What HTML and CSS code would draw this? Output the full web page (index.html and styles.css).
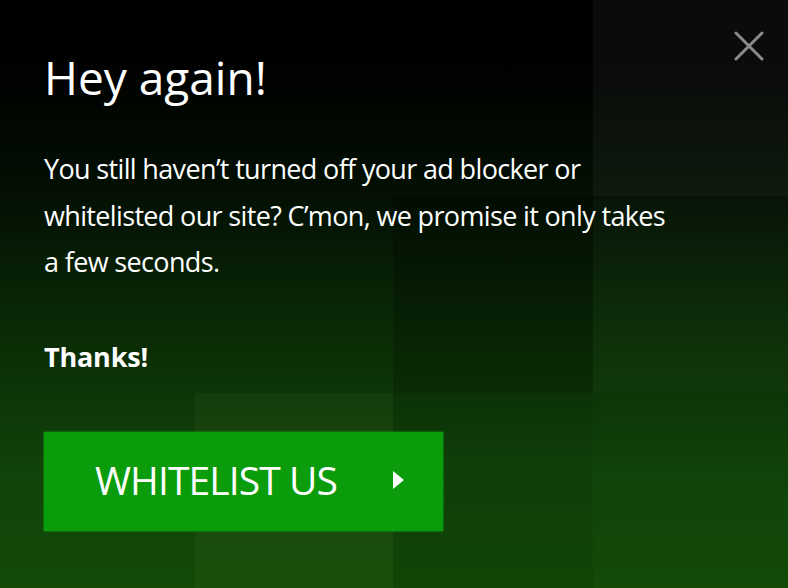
FILE: index.html
```html
<!DOCTYPE html>
<html lang="en">
<head>
<meta charset="UTF-8" />
<title>Hey again!</title>
<link rel="stylesheet" href="styles.css">
</head>
<body>
<div class="backdrop" aria-hidden="true">
  <div class="cell"></div><div class="cell"></div><div class="cell"></div><div class="cell light-1"></div>
  <div class="cell"></div><div class="cell"></div><div class="cell dark-2"></div><div class="cell light-0"></div>
  <div class="cell"></div><div class="cell light-2"></div><div class="cell dark-1"></div><div class="cell"></div>
</div>

<button class="close" aria-label="Schließen">
  <svg width="32" height="32" viewBox="0 0 32 32">
    <path d="M3 3 L29 29 M29 3 L3 29" stroke="#8c8c8c" stroke-width="3" stroke-linecap="round" fill="none"/>
  </svg>
</button>

<main class="modal">
  <h1>Hey again!</h1>
  <p class="text">You still haven’t turned off your ad blocker or whitelisted our site? C’mon, we promise it only takes a few seconds.</p>
  <p class="thanks">Thanks!</p>
  <a href="#" class="btn">WHITELIST US <span class="arrow"></span></a>
</main>
</body>
</html>
```

FILE: styles.css
```css
html, body {
  height: 100%;
}
body {
  margin: 0;
  position: relative;
  overflow: hidden;
  font-family: "Open Sans", "Noto Sans", sans-serif;
  color: #fff;
  background: linear-gradient(to bottom, #000 0%, #000 10%, #031003 33%, #0a2c06 58%, #10430a 80%, #124a06 100%);
}
.backdrop {
  position: absolute;
  inset: 0;
  display: grid;
  grid-template-columns: 195px 198px 200px 1fr;
  grid-template-rows: 196px 197px 1fr;
  z-index: 0;
}
.light-0 { background: rgba(255,255,255,0.02); }
.light-1 { background: rgba(255,255,255,0.045); }
.light-2 { background: rgba(110,130,60,0.09); }
.dark-1 { background: rgba(0,0,0,0.06); }
.dark-2 { background: rgba(0,0,0,0.18); }

.modal {
  position: relative;
  z-index: 1;
  padding: 50px 0 0 44px;
}
h1 {
  margin: 0;
  font-size: 46px;
  line-height: 54px;
  font-weight: 400;
  letter-spacing: 0;
}
.text {
  margin: 42px 0 0;
  width: 628px;
  font-size: 27px;
  line-height: 46.5px;
  letter-spacing: -0.65px;
}
.thanks {
  margin: 48px 0 0;
  font-size: 27px;
  line-height: 46.5px;
  font-weight: 700;
  letter-spacing: -0.2px;
}
.btn {
  margin-top: 52px;
  display: flex;
  align-items: center;
  width: 399px;
  height: 99px;
  box-sizing: border-box;
  padding-left: 51px;
  padding-bottom: 4px;
  background: #0b9c0b;
  box-shadow: 0 0 2px #14b014;
  color: #fff;
  text-decoration: none;
  font-size: 39px;
  letter-spacing: -0.9px;
}
.arrow {
  margin-left: 56px;
  width: 0;
  height: 0;
  border-left: 11px solid #fff;
  border-top: 9px solid transparent;
  border-bottom: 9px solid transparent;
}
.close {
  position: absolute;
  top: 30px;
  right: 23px;
  z-index: 2;
  padding: 0;
  background: none;
  border: none;
  cursor: pointer;
}
.close svg {
  display: block;
}
```
